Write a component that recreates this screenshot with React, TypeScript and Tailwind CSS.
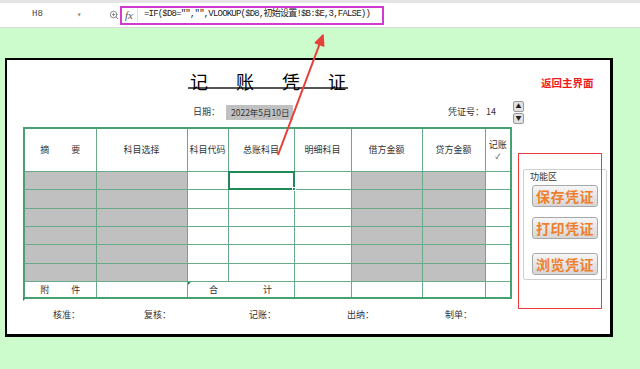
import React from 'react'
import { ZoomIn } from 'lucide-react'

const cjk = { fontFamily: '"Noto Sans CJK SC", "Liberation Sans", sans-serif' }
const mono = { fontFamily: '"Liberation Mono", "Noto Sans CJK SC", monospace' }

// 列宽：摘要 / 科目选择 / 科目代码 / 总账科目 / 明细科目 / 借方金额 / 贷方金额 / 记账
const colWidths = [72, 91, 41, 66, 57, 71, 63, 26]
const grayCols = [0, 1, 5, 6]
const rowHeights = [18, 19, 18, 18, 19, 18]

function FormulaBar() {
  return (
    <div className="h-[28px] bg-white border-t-[3px] border-[#e4e4e4] border-b border-b-[#d8d8d8] flex items-center">
      <div className="w-[88px] h-full flex items-center text-[9px] text-[#444]" style={mono}>
        <span className="ml-[32px]">H8</span>
        <span className="ml-[34px] text-[8px] text-[#888]">▾</span>
      </div>
      <ZoomIn size={10} className="text-[#777] ml-[21px]" />
      <div className="ml-[1px] w-[264px] h-[19px] border-2 border-[#d03ad0] flex items-center bg-white">
        <span className="ml-[3px] text-[11px] italic text-[#555]" style={{ fontFamily: '"Liberation Serif", serif' }}>fx</span>
        <span className="ml-[4px] w-px h-[13px] bg-[#ddd]" />
        <span className="ml-[6px] text-[9px] tracking-[-0.8px] text-[#222] whitespace-nowrap" style={mono}>
          =IF($D8="","",VLOOKUP($D8,初始设置!$B:$E,3,FALSE))
        </span>
      </div>
    </div>
  )
}

function VoucherTable() {
  return (
    <table className="border-collapse table-fixed w-[486px] border-2 border-[#47a172] text-[9px] text-[#333]" style={cjk}>
      <colgroup>
        {colWidths.map((w, i) => (
          <col key={i} style={{ width: w }} />
        ))}
      </colgroup>
      <tbody>
        <tr className="h-[43px]">
          <td className="border border-[#6aa98a] text-center">
            <span>摘</span>
            <span className="ml-[22px]">要</span>
          </td>
          <td className="border border-[#6aa98a] text-center">科目选择</td>
          <td className="border border-[#6aa98a] text-center">科目代码</td>
          <td className="border border-[#6aa98a] text-center">总账科目</td>
          <td className="border border-[#6aa98a] text-center">明细科目</td>
          <td className="border border-[#6aa98a] text-center">借方金额</td>
          <td className="border border-[#6aa98a] text-center">贷方金额</td>
          <td className="border border-[#6aa98a] text-center align-top p-0">
            <div className="mt-[11px] flex flex-col items-center">
              <span className="leading-[10px]">记账</span>
              <span className="mt-[2px] leading-[8px] text-[7px]">✓</span>
            </div>
          </td>
        </tr>
        {rowHeights.map((h, r) => (
          <tr key={r} style={{ height: h }}>
            {colWidths.map((_, c) => (
              <td
                key={c}
                className={
                  'border border-[#6aa98a] p-0 relative ' + (grayCols.includes(c) ? 'bg-[#c0c0c0]' : 'bg-white')
                }
              >
                {r === 0 && c === 3 && (
                  <div className="absolute inset-[-1px] border-2 border-[#1f8a55]">
                    <div className="absolute right-[-3px] bottom-[-3px] w-[4px] h-[4px] bg-[#1f8a55] border border-white" />
                  </div>
                )}
              </td>
            ))}
          </tr>
        ))}
        <tr className="h-[17px]">
          <td className="border border-[#6aa98a] text-center relative">
            <span>附</span>
            <span className="ml-[22px]">件</span>
            <span className="absolute left-[-2px] bottom-[-4px] w-0 h-0 border-t-[3px] border-t-[#2f8a5a] border-r-[3px] border-r-transparent" />
          </td>
          <td className="border border-[#6aa98a]" />
          <td colSpan={2} className="border border-[#6aa98a] text-center relative">
            <span>合</span>
            <span className="ml-[45px]">计</span>
            <span className="absolute left-0 top-0 w-0 h-0 border-t-[3px] border-t-[#2f8a5a] border-r-[3px] border-r-transparent" />
          </td>
          <td className="border border-[#6aa98a]" />
          <td className="border border-[#6aa98a]" />
          <td className="border border-[#6aa98a]" />
          <td className="border border-[#6aa98a]" />
        </tr>
      </tbody>
    </table>
  )
}

function ActionButton({ label, className }: { label: string; className?: string }) {
  return (
    <div
      className={
        'ml-[8px] w-[66px] h-[22px] rounded-[3px] border border-[#a8a8a8] bg-gradient-to-b from-[#f6f6f6] to-[#d6d6d6] flex items-center justify-center text-[14px] font-bold text-[#ef7f2c] tracking-[0.5px] ' +
        (className || '')
      }
      style={cjk}
    >
      {label}
    </div>
  )
}

function FunctionPanel() {
  return (
    <div className="relative ml-[6px] mt-[26px] w-[84px] h-[156px] shrink-0">
      <div className="ml-[5px] mt-[16px] w-[84px] h-[111px] border border-[#cfcfcf] rounded-[2px] flex flex-col">
        <span className="ml-[6px] mt-[1px] text-[9px] leading-[11px] text-[#333]" style={cjk}>功能区</span>
        <ActionButton label="保存凭证" className="mt-[3px]" />
        <ActionButton label="打印凭证" className="mt-[10px]" />
        <ActionButton label="浏览凭证" className="mt-[14px]" />
      </div>
      {/* 红色标注框 */}
      <div className="absolute inset-0 border border-[#ee3a3a] pointer-events-none" />
    </div>
  )
}

export default function App() {
  return (
    <div className="w-[640px] h-[369px] bg-[#ccfccc] relative overflow-hidden">
      <FormulaBar />

      <div className="ml-[5px] mt-[30px] w-[608px] h-[279px] bg-white border-black border-l-2 border-t-2 border-r-[3px] border-b-[3px] flex flex-col" style={cjk}>
        {/* 标题行 */}
        <div className="h-[37px] flex items-start shrink-0">
          <div className="ml-[181px] mt-[13px] px-[2px] h-[16px] leading-[16px] border-b-2 border-[#555] flex gap-[28px] text-[18px] text-black">
            <span>记</span>
            <span>账</span>
            <span>凭</span>
            <span>证</span>
          </div>
          <span className="ml-[193px] mt-[16px] text-[10.5px] leading-[14px] font-bold text-[#f01c1c]">返回主界面</span>
        </div>

        {/* 日期 / 凭证号 */}
        <div className="h-[30px] flex items-center text-[9px] text-[#333] shrink-0">
          <span className="ml-[186px] w-[33px]">日期：</span>
          <div className="w-[67px] h-[15px] bg-[#c0c0c0] flex items-center pl-[5px] text-[8.5px] whitespace-nowrap">2022年5月10日</div>
          <span className="ml-[155px]">凭证号：</span>
          <span className="ml-[2px]">14</span>
          <div className="ml-[17px] flex flex-col gap-[1px]">
            <div className="w-[11px] h-[11px] rounded-[2px] border border-[#9a9a9a] bg-[#e2e2e2] flex items-center justify-center text-[6px] leading-none text-[#222]">▲</div>
            <div className="w-[11px] h-[11px] rounded-[2px] border border-[#9a9a9a] bg-[#e2e2e2] flex items-center justify-center text-[6px] leading-none text-[#222]">▼</div>
          </div>
        </div>

        {/* 表格 + 功能区 */}
        <div className="flex items-start">
          <div className="ml-[16px] flex flex-col">
            <VoucherTable />
            <div className="mt-[10px] flex text-[9px] leading-[12px] text-[#333]">
              <span className="ml-[30px] w-[91px]">核准：</span>
              <span className="w-[105px]">复核：</span>
              <span className="w-[98px]">记账：</span>
              <span className="w-[98px]">出纳：</span>
              <span>制单：</span>
            </div>
          </div>
          <FunctionPanel />
        </div>
      </div>

      {/* 红色箭头标注 */}
      <svg className="absolute left-0 top-0 pointer-events-none" width="640" height="369">
        <line x1="278" y1="155" x2="319.5" y2="44.4" stroke="#e8403a" strokeWidth="2" />
        <polygon points="323,35 323.7,46 315.3,42.8" fill="#e8403a" stroke="#e8403a" strokeWidth="1.5" strokeLinejoin="round" />
      </svg>
    </div>
  )
}
